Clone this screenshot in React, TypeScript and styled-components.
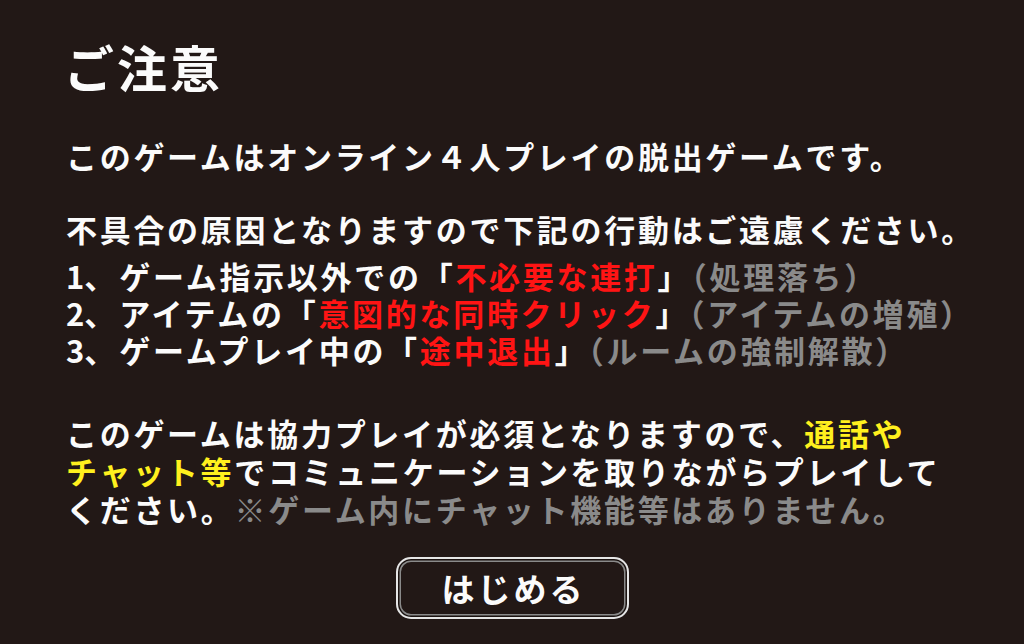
import React from 'react'
import styled, { createGlobalStyle } from 'styled-components'

const BG = '#221816'
const RED = '#ff1414'
const YELLOW = '#fff01e'
const GREY = '#8a8a8a'
const FONT = '"Noto Sans CJK JP", "Noto Sans", sans-serif'

const Global = createGlobalStyle`
  html, body {
    margin: 0;
    padding: 0;
    background: ${BG};
  }
  body {
    font-family: ${FONT};
    color: #fbfbfb;
  }
`

const Page = styled.main`
  width: 1024px;
  height: 644px;
  box-sizing: border-box;
  padding: 36px 0 0 66px;
  overflow: hidden;
`

const Title = styled.h1`
  margin: 0 0 0 -2px;
  font-size: 50px;
  line-height: 60px;
  font-weight: 700;
  letter-spacing: 3px;
`

const Para = styled.p<{ $top: number; $line?: number }>`
  margin: ${({ $top }) => $top}px 0 0;
  font-size: 31px;
  line-height: ${({ $line }) => $line ?? 37}px;
  font-weight: 700;
  letter-spacing: 2.7px;
  white-space: nowrap;
`

const List = styled.ol`
  margin: 10px 0 0;
  padding: 0;
  list-style: none;
`

const Item = styled.li`
  font-size: 31px;
  line-height: 37px;
  font-weight: 700;
  letter-spacing: 2.7px;
  white-space: nowrap;
`

const Num = styled.span`
  letter-spacing: 0;
  margin-right: 4px;
`

const Mark = styled.span<{ $tone: 'red' | 'yellow' | 'grey' }>`
  color: ${({ $tone }) => ($tone === 'red' ? RED : $tone === 'yellow' ? YELLOW : GREY)};
`

const Footer = styled.div`
  display: flex;
  justify-content: center;
  margin: 29px 0 0 -66px;
`

const StartButton = styled.button`
  width: 233px;
  height: 62px;
  box-sizing: border-box;
  border: 2px solid #e6e6e6;
  border-radius: 15px;
  background: ${BG};
  box-shadow: inset 0 0 0 1.5px #1a1210, inset 0 0 0 3px #8a8a8a;
  color: #fbfbfb;
  font-family: ${FONT};
  font-size: 33px;
  font-weight: 700;
  letter-spacing: 3px;
  padding: 0 0 0 3px;
  cursor: pointer;
`

const rules = [
  { lead: 'ゲーム指示以外での', hot: '不必要な連打', note: '（処理落ち）' },
  { lead: 'アイテムの', hot: '意図的な同時クリック', note: '（アイテムの増殖）' },
  { lead: 'ゲームプレイ中の', hot: '途中退出', note: '（ルームの強制解散）' },
]

export default function App() {
  return (
    <>
      <Global />
      <Page>
        <Title>ご注意</Title>
        <Para $top={41}>このゲームはオンライン４人プレイの脱出ゲームです。</Para>
        <Para $top={36}>不具合の原因となりますので下記の行動はご遠慮ください。</Para>
        <List>
          {rules.map((r, i) => (
            <Item key={r.hot}>
              <Num>{i + 1}、</Num>
              {r.lead}「<Mark $tone="red">{r.hot}</Mark>」<Mark $tone="grey">{r.note}</Mark>
            </Item>
          ))}
        </List>
        <Para $top={46} $line={38}>
          このゲームは協力プレイが必須となりますので、<Mark $tone="yellow">通話や</Mark>
          <br />
          <Mark $tone="yellow">チャット等</Mark>でコミュニケーションを取りながらプレイして
          <br />
          ください。<Mark $tone="grey">※ゲーム内にチャット機能等はありません。</Mark>
        </Para>
        <Footer>
          <StartButton>はじめる</StartButton>
        </Footer>
      </Page>
    </>
  )
}
